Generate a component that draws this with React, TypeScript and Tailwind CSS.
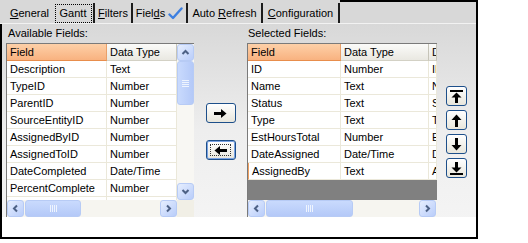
import React from "react";

type Dir = "up" | "down" | "left" | "right";

const chevronPaths: Record<Dir, string> = {
  up: "M1.5 6 L4.5 3 L7.5 6",
  down: "M1.5 3 L4.5 6 L7.5 3",
  left: "M6 1.5 L3 4.5 L6 7.5",
  right: "M3 1.5 L6 4.5 L3 7.5",
};

function ScrollBtn({ dir }: { dir: Dir }) {
  return (
    <div className="w-[17px] h-[17px] shrink-0 rounded-[3px] border border-[#b7cbf5] bg-gradient-to-br from-[#e6eefe] to-[#b9cdfa] flex items-center justify-center">
      <svg width="9" height="9" viewBox="0 0 9 9">
        <path d={chevronPaths[dir]} fill="none" stroke="#4d6185" strokeWidth="2" />
      </svg>
    </div>
  );
}

function VThumb({ h }: { h: string }) {
  return (
    <div className={`${h} w-[17px] shrink-0 rounded-[3px] border border-[#b7cbf5] bg-gradient-to-r from-[#c9dafd] to-[#b4c9f8] flex flex-col items-center justify-center gap-[1px]`}>
      <div className="w-[7px] h-[1px] bg-[#eef4fe]" />
      <div className="w-[7px] h-[1px] bg-[#eef4fe]" />
      <div className="w-[7px] h-[1px] bg-[#eef4fe]" />
      <div className="w-[7px] h-[1px] bg-[#eef4fe]" />
    </div>
  );
}

function HThumb({ w }: { w: string }) {
  return (
    <div className={`${w} h-[17px] shrink-0 rounded-[3px] border border-[#b7cbf5] bg-gradient-to-b from-[#c9dafd] to-[#b4c9f8] flex items-center justify-center gap-[1px]`}>
      <div className="h-[7px] w-[1px] bg-[#eef4fe]" />
      <div className="h-[7px] w-[1px] bg-[#eef4fe]" />
      <div className="h-[7px] w-[1px] bg-[#eef4fe]" />
      <div className="h-[7px] w-[1px] bg-[#eef4fe]" />
    </div>
  );
}

function U({ children }: { children: React.ReactNode }) {
  return <span className="underline underline-offset-[1px]">{children}</span>;
}

function Tab({
  w,
  children,
  selected,
  sep = true,
}: {
  w: string;
  children: React.ReactNode;
  selected?: boolean;
  sep?: boolean;
}) {
  return (
    <div className={`${w} h-[20px] mt-[3px] flex items-center justify-center shrink-0 ${sep ? "border-r-2 border-r-[#1c1c1c]" : ""}`}>
      {selected ? (
        <div className="h-[19px] w-[37px] flex items-center justify-center border border-dotted border-black">{children}</div>
      ) : (
        children
      )}
    </div>
  );
}

const leftRows: [string, string][] = [
  ["Description", "Text"],
  ["TypeID", "Number"],
  ["ParentID", "Number"],
  ["SourceEntityID", "Number"],
  ["AssignedByID", "Number"],
  ["AssignedToID", "Number"],
  ["DateCompleted", "Date/Time"],
  ["PercentComplete", "Number"],
  ["", ""],
];

const rightRows: [string, string, string][] = [
  ["ID", "Number", "ID"],
  ["Name", "Text", "Name"],
  ["Status", "Text", "Status"],
  ["Type", "Text", "Type"],
  ["EstHoursTotal", "Number", "Est"],
  ["DateAssigned", "Date/Time", "Date"],
  ["AssignedBy", "Text", "Assigned"],
];

function HeaderOrange({ w, children }: { w: string; children: React.ReactNode }) {
  return (
    <div className={`${w} h-[17px] shrink-0 pl-[3px] flex items-center bg-gradient-to-b from-[#fdd0a8] to-[#f8b280] border-b border-b-[#e88d4c] border-r border-r-[#e9a06a]`}>
      {children}
    </div>
  );
}

function HeaderGray({ w, children }: { w: string; children: React.ReactNode }) {
  return (
    <div className={`${w} h-[17px] shrink-0 pl-[3px] flex items-center bg-gradient-to-b from-[#fbfbf9] to-[#e9e8e1] border-b border-b-[#d3d1c5] border-r border-r-[#c6c4b8] overflow-hidden whitespace-nowrap`}>
      {children}
    </div>
  );
}

function Cell({ w, children, extra = "" }: { w: string; children: React.ReactNode; extra?: string }) {
  return (
    <div className={`${w} h-[17px] shrink-0 pl-[3px] flex items-center bg-white border-b border-r border-[#ebe8da] overflow-hidden whitespace-nowrap ${extra}`}>
      {children}
    </div>
  );
}

function Arrow({ kind }: { kind: "right" | "left" | "top" | "up" | "down" | "bottom" }) {
  if (kind === "right")
    return (
      <svg width="13" height="9" viewBox="0 0 13 9">
        <rect x="0" y="3" width="8" height="3" fill="black" />
        <path d="M7 0 L12.5 4.5 L7 9 Z" fill="black" />
      </svg>
    );
  if (kind === "left")
    return (
      <svg width="13" height="9" viewBox="0 0 13 9">
        <rect x="5" y="3" width="8" height="3" fill="black" />
        <path d="M6 0 L0.5 4.5 L6 9 Z" fill="black" />
      </svg>
    );
  if (kind === "up")
    return (
      <svg width="11" height="13" viewBox="0 0 11 13">
        <path d="M5.5 0.5 L10.5 6 L0.5 6 Z" fill="black" />
        <rect x="4" y="5" width="3" height="8" fill="black" />
      </svg>
    );
  if (kind === "down")
    return (
      <svg width="11" height="13" viewBox="0 0 11 13">
        <path d="M5.5 12.5 L10.5 7 L0.5 7 Z" fill="black" />
        <rect x="4" y="0" width="3" height="8" fill="black" />
      </svg>
    );
  if (kind === "top")
    return (
      <svg width="13" height="13" viewBox="0 0 13 13">
        <rect x="0" y="0" width="13" height="2" fill="black" />
        <path d="M6.5 2.5 L11.5 7.5 L1.5 7.5 Z" fill="black" />
        <rect x="5" y="7" width="3" height="6" fill="black" />
      </svg>
    );
  return (
    <svg width="13" height="13" viewBox="0 0 13 13">
      <rect x="0" y="11" width="13" height="2" fill="black" />
      <path d="M6.5 10.5 L11.5 5.5 L1.5 5.5 Z" fill="black" />
      <rect x="5" y="0" width="3" height="6" fill="black" />
    </svg>
  );
}

function XPButton({ w, children, focused }: { w: string; children: React.ReactNode; focused?: boolean }) {
  return (
    <div className={`${w} h-[20px] shrink-0 rounded-[3px] border border-[#1d4f8a] bg-gradient-to-b from-[#ffffff] to-[#e8e6dc] flex items-center justify-center ${focused ? "ring-1 ring-inset ring-[#7aa2e2]" : ""}`}>
      {focused ? (
        <div className="w-[21px] h-[12px] border border-dotted border-[#333] flex items-center justify-center">{children}</div>
      ) : (
        children
      )}
    </div>
  );
}

export default function App() {
  return (
    <div className="w-[528px] h-[243px] bg-white font-['Liberation_Sans',Arial,sans-serif] text-[11px] text-black leading-[13px] select-none">
      <div className="w-[478px] h-[239px] flex flex-col border-r-2 border-b-2 border-black">
        {/* Tab strip */}
        <div className="h-[24px] shrink-0 flex bg-[#d8d8d8] border-b border-b-[#f2f2f2]">
          <div className="w-[6px] shrink-0" />
          <Tab w="w-[47px]" sep={false}>
            <span>
              <U>G</U>eneral
            </span>
          </Tab>
          <Tab w="w-[42px]" selected>
            <span>Gantt</span>
          </Tab>
          <Tab w="w-[38px]">
            <span>
              <U>F</U>ilters
            </span>
          </Tab>
          <Tab w="w-[55px]">
            <span className="flex items-center gap-[3px]">
              <span>
                Fiel<U>d</U>s
              </span>
              <svg width="15" height="13" viewBox="0 0 15 13">
                <path d="M1.5 7.5 L5 11 L13.5 1.5" fill="none" stroke="#3d7fe0" strokeWidth="2.4" strokeLinecap="round" strokeLinejoin="round" />
              </svg>
            </span>
          </Tab>
          <Tab w="w-[75px]">
            <span>
              Auto <U>R</U>efresh
            </span>
          </Tab>
          <Tab w="w-[77px]">
            <span>
              <U>C</U>onfiguration
            </span>
          </Tab>
          <div className="flex-1 border-t-2 border-black" />
        </div>

        {/* Body */}
        <div className="flex-1 flex flex-col bg-gradient-to-b from-[#d8d8d8] via-[#eeeeee] to-[#f5f5f5] border-l-2 border-black">
          <div className="h-[19px] shrink-0 flex items-center">
            <div className="w-[246px] pl-[6px]">Available Fields:</div>
            <div>Selected Fields:</div>
          </div>
          <div className="h-[174px] shrink-0 flex">
            <div className="w-[4px] shrink-0" />
            {/* Left grid */}
            <div className="w-[188px] h-[174px] shrink-0 flex flex-col border-l border-t border-[#7a7a7a] bg-white">
              <div className="h-[156px] flex">
                <div className="w-[170px] flex flex-col overflow-hidden">
                  <div className="flex">
                    <HeaderOrange w="w-[100px]">Field</HeaderOrange>
                    <HeaderGray w="w-[70px]">Data Type</HeaderGray>
                  </div>
                  {leftRows.map(([a, b], i) => (
                    <div className="flex" key={i}>
                      <Cell w="w-[100px]">{a}</Cell>
                      <Cell w="w-[70px]">{b}</Cell>
                    </div>
                  ))}
                </div>
                <div className="w-[17px] flex flex-col bg-[#f8f7f3]">
                  <ScrollBtn dir="up" />
                  <VThumb h="h-[44px]" />
                  <div className="flex-1" />
                  <ScrollBtn dir="down" />
                </div>
              </div>
              <div className="h-[17px] flex bg-[#f6f5f0]">
                <ScrollBtn dir="left" />
                <div className="w-[1px]" />
                <HThumb w="w-[56px]" />
                <div className="flex-1" />
                <ScrollBtn dir="right" />
                <div className="w-[17px] bg-[#f1efe6]" />
              </div>
            </div>

            {/* Middle buttons */}
            <div className="w-[53px] shrink-0 flex flex-col items-center pt-[60px] gap-[17px]">
              <XPButton w="w-[30px]">
                <Arrow kind="right" />
              </XPButton>
              <XPButton w="w-[30px]" focused>
                <Arrow kind="left" />
              </XPButton>
            </div>

            {/* Right grid */}
            <div className="w-[190px] h-[174px] shrink-0 flex flex-col border-l border-t border-[#7a7a7a] bg-[#808080]">
              <div className="h-[156px] flex flex-col overflow-hidden">
                <div className="flex">
                  <HeaderOrange w="w-[93px]">Field</HeaderOrange>
                  <HeaderGray w="w-[88px]">Data Type</HeaderGray>
                  <HeaderGray w="w-[8px]">Description</HeaderGray>
                </div>
                {rightRows.map(([a, b, c], i) => (
                  <div className="flex" key={i}>
                    <Cell w="w-[93px]" extra={i === rightRows.length - 1 ? "border-l border-l-[#f0a060]" : ""}>
                      {a}
                    </Cell>
                    <Cell w="w-[88px]">{b}</Cell>
                    <Cell w="w-[8px]">{c}</Cell>
                  </div>
                ))}
              </div>
              <div className="h-[17px] flex bg-[#f6f5f0]">
                <ScrollBtn dir="left" />
                <div className="w-[1px]" />
                <HThumb w="w-[87px]" />
                <div className="flex-1" />
                <ScrollBtn dir="right" />
                <div className="w-[1px]" />
              </div>
            </div>

            {/* Right buttons */}
            <div className="flex-1 flex flex-col items-center pt-[43px] gap-[4px]">
              <XPButton w="w-[21px]">
                <Arrow kind="top" />
              </XPButton>
              <XPButton w="w-[21px]">
                <Arrow kind="up" />
              </XPButton>
              <XPButton w="w-[21px]">
                <Arrow kind="down" />
              </XPButton>
              <XPButton w="w-[21px]">
                <Arrow kind="bottom" />
              </XPButton>
            </div>
          </div>
          <div className="flex-1 bg-white" />
        </div>
      </div>
    </div>
  );
}
